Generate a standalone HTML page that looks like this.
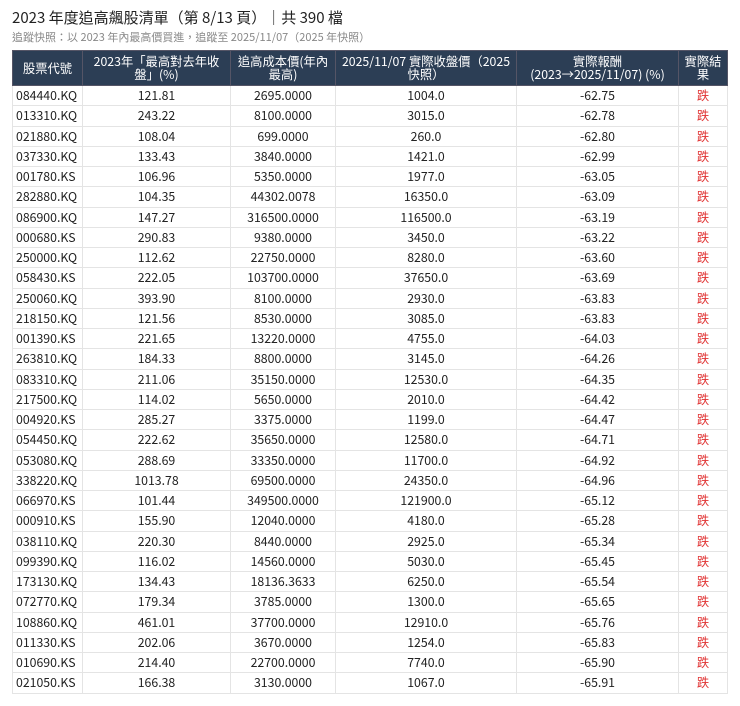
<!DOCTYPE html><html><head><meta charset="utf-8"><style>
body{margin:0;background:#fff;font-family:"Liberation Sans","Noto Sans CJK TC",sans-serif;color:#222}
.t{position:absolute;left:12px;top:7px;font-size:15px;font-family:"Noto Sans CJK TC",sans-serif;color:#222;white-space:nowrap}
.s{position:absolute;left:12px;top:29px;font-size:11px;color:#888;font-family:"Noto Sans CJK TC",sans-serif;white-space:nowrap}
table{position:absolute;left:12px;top:50px;border-collapse:collapse;table-layout:fixed;width:715px;font-family:"Noto Sans CJK TC",sans-serif;font-size:12.3px}
th{background:#2c3e55;color:#fff;font-weight:normal;height:34px;padding:0 1px;line-height:13px;border:1px solid #556;font-size:12.3px;white-space:nowrap;overflow:hidden}
td{height:19.25px;padding:0 3px;border:1px solid #e4e4e4;text-align:center;line-height:19px}
td:first-child{text-align:left}
td:last-child{color:#e03131}
</style></head><body>
<div class="t">2023 年度追高飆股清單（第 8/13 頁）｜共 390 檔</div>
<div class="s">追蹤快照：以 2023 年內最高價買進，追蹤至 2025/11/07（2025 年快照）</div>
<table><colgroup><col style="width:70px"><col style="width:148px"><col style="width:105px"><col style="width:181px"><col style="width:162px"><col style="width:49px"></colgroup>
<tr><th>股票代號</th><th>2023年「最高對去年收<br>盤」(%)</th><th>追高成本價(年內<br>最高)</th><th>2025/11/07 實際收盤價（2025<br>快照）</th><th>實際報酬<br>(2023→2025/11/07) (%)</th><th>實際結<br>果</th></tr>
<tr><td>084440.KQ</td><td>121.81</td><td>2695.0000</td><td>1004.0</td><td>-62.75</td><td>跌</td></tr>
<tr><td>013310.KQ</td><td>243.22</td><td>8100.0000</td><td>3015.0</td><td>-62.78</td><td>跌</td></tr>
<tr><td>021880.KQ</td><td>108.04</td><td>699.0000</td><td>260.0</td><td>-62.80</td><td>跌</td></tr>
<tr><td>037330.KQ</td><td>133.43</td><td>3840.0000</td><td>1421.0</td><td>-62.99</td><td>跌</td></tr>
<tr><td>001780.KS</td><td>106.96</td><td>5350.0000</td><td>1977.0</td><td>-63.05</td><td>跌</td></tr>
<tr><td>282880.KQ</td><td>104.35</td><td>44302.0078</td><td>16350.0</td><td>-63.09</td><td>跌</td></tr>
<tr><td>086900.KQ</td><td>147.27</td><td>316500.0000</td><td>116500.0</td><td>-63.19</td><td>跌</td></tr>
<tr><td>000680.KS</td><td>290.83</td><td>9380.0000</td><td>3450.0</td><td>-63.22</td><td>跌</td></tr>
<tr><td>250000.KQ</td><td>112.62</td><td>22750.0000</td><td>8280.0</td><td>-63.60</td><td>跌</td></tr>
<tr><td>058430.KS</td><td>222.05</td><td>103700.0000</td><td>37650.0</td><td>-63.69</td><td>跌</td></tr>
<tr><td>250060.KQ</td><td>393.90</td><td>8100.0000</td><td>2930.0</td><td>-63.83</td><td>跌</td></tr>
<tr><td>218150.KQ</td><td>121.56</td><td>8530.0000</td><td>3085.0</td><td>-63.83</td><td>跌</td></tr>
<tr><td>001390.KS</td><td>221.65</td><td>13220.0000</td><td>4755.0</td><td>-64.03</td><td>跌</td></tr>
<tr><td>263810.KQ</td><td>184.33</td><td>8800.0000</td><td>3145.0</td><td>-64.26</td><td>跌</td></tr>
<tr><td>083310.KQ</td><td>211.06</td><td>35150.0000</td><td>12530.0</td><td>-64.35</td><td>跌</td></tr>
<tr><td>217500.KQ</td><td>114.02</td><td>5650.0000</td><td>2010.0</td><td>-64.42</td><td>跌</td></tr>
<tr><td>004920.KS</td><td>285.27</td><td>3375.0000</td><td>1199.0</td><td>-64.47</td><td>跌</td></tr>
<tr><td>054450.KQ</td><td>222.62</td><td>35650.0000</td><td>12580.0</td><td>-64.71</td><td>跌</td></tr>
<tr><td>053080.KQ</td><td>288.69</td><td>33350.0000</td><td>11700.0</td><td>-64.92</td><td>跌</td></tr>
<tr><td>338220.KQ</td><td>1013.78</td><td>69500.0000</td><td>24350.0</td><td>-64.96</td><td>跌</td></tr>
<tr><td>066970.KS</td><td>101.44</td><td>349500.0000</td><td>121900.0</td><td>-65.12</td><td>跌</td></tr>
<tr><td>000910.KS</td><td>155.90</td><td>12040.0000</td><td>4180.0</td><td>-65.28</td><td>跌</td></tr>
<tr><td>038110.KQ</td><td>220.30</td><td>8440.0000</td><td>2925.0</td><td>-65.34</td><td>跌</td></tr>
<tr><td>099390.KQ</td><td>116.02</td><td>14560.0000</td><td>5030.0</td><td>-65.45</td><td>跌</td></tr>
<tr><td>173130.KQ</td><td>134.43</td><td>18136.3633</td><td>6250.0</td><td>-65.54</td><td>跌</td></tr>
<tr><td>072770.KQ</td><td>179.34</td><td>3785.0000</td><td>1300.0</td><td>-65.65</td><td>跌</td></tr>
<tr><td>108860.KQ</td><td>461.01</td><td>37700.0000</td><td>12910.0</td><td>-65.76</td><td>跌</td></tr>
<tr><td>011330.KS</td><td>202.06</td><td>3670.0000</td><td>1254.0</td><td>-65.83</td><td>跌</td></tr>
<tr><td>010690.KS</td><td>214.40</td><td>22700.0000</td><td>7740.0</td><td>-65.90</td><td>跌</td></tr>
<tr><td>021050.KS</td><td>166.38</td><td>3130.0000</td><td>1067.0</td><td>-65.91</td><td>跌</td></tr>
</table></body></html>
